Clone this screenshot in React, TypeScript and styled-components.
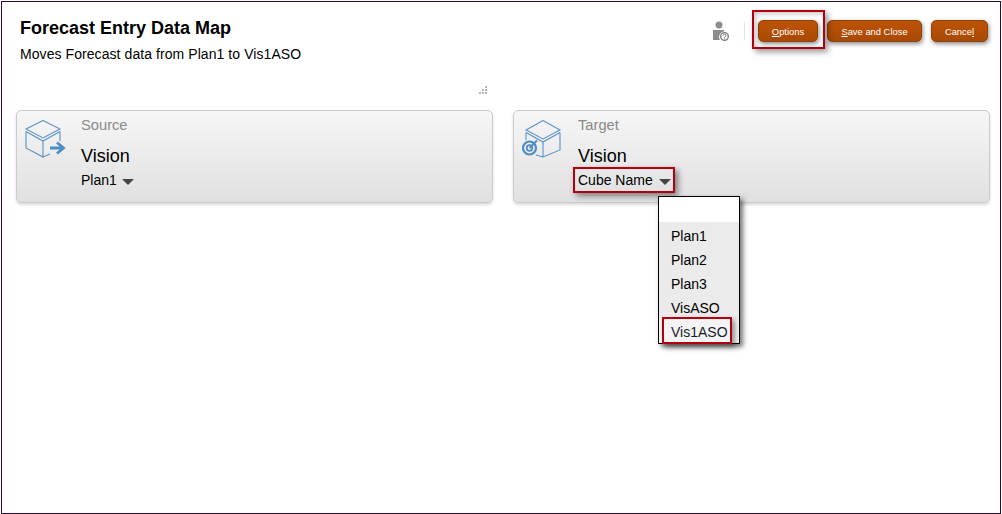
import styled, { createGlobalStyle } from 'styled-components'

const GlobalStyle = createGlobalStyle`
    html, body {
        margin: 0;
        padding: 0;
        background: #fff;
    }
    body {
        font-family: "Liberation Sans", Arial, sans-serif;
        color: #000;
    }
`

const options = ['Plan1', 'Plan2', 'Plan3', 'VisASO']

function SourceIcon() {
    return (
        <svg width="42" height="40" viewBox="0 0 42 40" fill="none" stroke="#5b92c8" strokeWidth="1.1">
            <path d="M1 9 L18 0.5 L35 9 L18 18 Z" />
            <path d="M1 11.5 L18 21 L35 11.5" />
            <path d="M1 11.5 V28 L18 37 V21" />
            <path d="M35 11.5 V21 M18 37 L25 34" />
            <path d="M25 28 H37 M32 22.5 L38.5 28 L32 33.5" stroke="#4f8bc4" strokeWidth="2.8" />
        </svg>
    )
}

function TargetIcon() {
    return (
        <svg width="42" height="40" viewBox="0 0 42 40" fill="none" stroke="#5b92c8" strokeWidth="1.1">
            <path d="M4 10 L21 0.5 L38 10 L21 19 Z" />
            <path d="M4 12.5 L21 22 L38 12.5" />
            <path d="M4 12.5 V20 M21 22 V37 L38 30 V12.5 M14 35 L21 37" />
            <circle cx="7.5" cy="28" r="6.5" strokeWidth="2.2" stroke="#4f8bc4" />
            <circle cx="7.5" cy="28" r="2.8" strokeWidth="1.7" stroke="#4f8bc4" />
            <path d="M7.5 28 L15 20.5" strokeWidth="1.8" stroke="#4f8bc4" />
        </svg>
    )
}

function HelpUserIcon() {
    return (
        <svg width="18" height="20" viewBox="0 0 18 20">
            <circle cx="7" cy="4" r="3.5" fill="#8c8c8c" />
            <path d="M1 9 H12 V10.5 A5.5 5.5 0 0 0 8 19 H1 Z" fill="#8c8c8c" />
            <circle cx="12.5" cy="15.5" r="3.8" fill="none" stroke="#777" strokeWidth="1.3" />
            <path d="M11.2 14.6 A1.4 1.4 0 1 1 12.9 15.9 L12.5 16.6" fill="none" stroke="#777" strokeWidth="1" />
            <circle cx="12.5" cy="17.8" r="0.6" fill="#777" />
        </svg>
    )
}

export default function App() {
    return (
        <>
            <GlobalStyle />
            <Frame>
                <Header>
                    <div>
                        <Title>Forecast Entry Data Map</Title>
                        <Subtitle>Moves Forecast data from Plan1 to Vis1ASO</Subtitle>
                    </div>
                    <Toolbar>
                        <HelpIcon>
                            <HelpUserIcon />
                        </HelpIcon>
                        <Divider />
                        <HighlightedButton>
                            <ActionButton $width={60}>
                                <u>O</u>ptions
                            </ActionButton>
                        </HighlightedButton>
                        <ActionButton $width={95} $gap>
                            <u>S</u>ave and Close
                        </ActionButton>
                        <ActionButton $width={57} $gap>
                            Cance<u>l</u>
                        </ActionButton>
                    </Toolbar>
                </Header>
                <Grip>
                    <svg width="9" height="8" viewBox="0 0 9 8" fill="#b5b5b5">
                        <rect x="6" y="0" width="2" height="2" />
                        <rect x="3" y="3" width="2" height="2" />
                        <rect x="6" y="3" width="2" height="2" />
                        <rect x="0" y="6" width="2" height="2" />
                        <rect x="3" y="6" width="2" height="2" />
                        <rect x="6" y="6" width="2" height="2" />
                    </svg>
                </Grip>
                <Cards>
                    <Card>
                        <CardIcon>
                            <SourceIcon />
                        </CardIcon>
                        <CardBody>
                            <CardLabel>Source</CardLabel>
                            <CardName>Vision</CardName>
                            <Selector>
                                Plan1 <Caret />
                            </Selector>
                        </CardBody>
                    </Card>
                    <Card>
                        <CardIcon>
                            <TargetIcon />
                        </CardIcon>
                        <CardBody>
                            <CardLabel>Target</CardLabel>
                            <CardName>Vision</CardName>
                            <Selector>
                                Cube Name <Caret $wide />
                                <SelectorHighlight />
                                <Menu>
                                    <MenuBlank />
                                    <MenuList>
                                        {options.map((o) => (
                                            <MenuItem key={o}>{o}</MenuItem>
                                        ))}
                                    </MenuList>
                                    <SelectedItem>Vis1ASO</SelectedItem>
                                </Menu>
                            </Selector>
                        </CardBody>
                    </Card>
                </Cards>
            </Frame>
        </>
    )
}

const Frame = styled.div`
    box-sizing: border-box;
    width: 1000px;
    height: 513px;
    margin: 1px 0 0 1px;
    border: 1px solid #2d0a36;
    padding: 16px 12px 0 14px;
`

const Header = styled.header`
    display: flex;
    justify-content: space-between;
    align-items: flex-start;
    padding-left: 4px;
`

const Title = styled.h1`
    margin: 0;
    font-size: 18px;
    line-height: 21px;
    font-weight: 700;
`

const Subtitle = styled.p`
    margin: 7px 0 0;
    font-size: 14px;
    line-height: 16px;
    letter-spacing: 0.07px;
`

const Toolbar = styled.div`
    display: flex;
    align-items: center;
    height: 24px;
    margin-top: 1px;
`

const HelpIcon = styled.div`
    display: flex;
    margin-right: 14px;
`

const Divider = styled.div`
    width: 1px;
    height: 18px;
    background: #e3e3e3;
    margin-right: 13px;
`

const ActionButton = styled.button<{ $gap?: boolean; $width: number }>`
    width: ${(p) => p.$width}px;
    height: 22px;
    padding: 0;
    margin-left: ${(p) => (p.$gap ? '9px' : '0')};
    border: 1px solid #8f4208;
    border-radius: 5px;
    background: linear-gradient(#bd5205, #a84a05);
    color: #fff;
    font-family: inherit;
    font-size: 9.4px;
    box-shadow: 1px 2px 4px rgba(0, 0, 0, 0.45);
`

const HighlightedButton = styled.div`
    position: relative;
    display: flex;
    &::after {
        content: '';
        position: absolute;
        left: -6px;
        top: -10px;
        width: 69px;
        height: 35px;
        border: 2px solid #b3000f;
        box-shadow: 3px 3px 6px rgba(0, 0, 0, 0.4), inset 2px 2px 5px rgba(0, 0, 0, 0.22);
        pointer-events: none;
    }
`

const Grip = styled.div`
    display: flex;
    justify-content: flex-end;
    width: 472px;
    height: 10px;
    margin-top: 24px;
`

const Cards = styled.div`
    display: grid;
    grid-template-columns: 477px 477px;
    column-gap: 20px;
    margin-top: 14px;
`

const Card = styled.section`
    box-sizing: border-box;
    display: flex;
    height: 93px;
    border: 1px solid #cbcbcb;
    border-radius: 5px;
    background: linear-gradient(#f6f6f6, #e0e0e0);
    box-shadow: 0 2px 3px rgba(0, 0, 0, 0.15);
`

const CardIcon = styled.div`
    width: 64px;
    padding: 9px 0 0 8px;
    box-sizing: border-box;
`

const CardBody = styled.div`
    display: flex;
    flex-direction: column;
    align-items: flex-start;
`

const CardLabel = styled.div`
    margin-top: 6px;
    font-size: 14.7px;
    line-height: 16px;
    color: #8a8a8a;
`

const CardName = styled.div`
    margin-top: 13px;
    font-size: 18px;
    line-height: 21px;
`

const Selector = styled.div`
    position: relative;
    display: flex;
    align-items: center;
    margin-top: 5px;
    font-size: 14px;
    line-height: 16px;
    white-space: pre;
`

const Caret = styled.span<{ $wide?: boolean }>`
    width: 0;
    height: 0;
    margin-left: ${(p) => (p.$wide ? '2px' : '1px')};
    margin-top: 3px;
    border-left: 6px solid transparent;
    border-right: 6px solid transparent;
    border-top: 6px solid #444;
`

const SelectorHighlight = styled.span`
    position: absolute;
    left: -5px;
    top: -5px;
    width: 98px;
    height: 22px;
    border: 2px solid #b3000f;
    box-shadow: 3px 3px 6px rgba(0, 0, 0, 0.45);
`

const Menu = styled.div`
    position: absolute;
    left: 80px;
    top: 24px;
    z-index: 2;
    box-sizing: border-box;
    width: 82px;
    height: 148px;
    border: 1px solid #000;
    background: #fff;
    box-shadow: 3px 3px 5px rgba(0, 0, 0, 0.55);
`

const MenuBlank = styled.div`
    height: 25px;
`

const MenuList = styled.div`
    padding-top: 2px;
    background: #ebebeb;
`

const MenuItem = styled.div`
    height: 24px;
    padding-left: 12px;
    font-size: 14px;
    line-height: 24px;
`

const SelectedItem = styled(MenuItem)`
    position: relative;
    height: 23px;
    background: #f4f4f4;
    color: #1a1a2a;
    &::after {
        content: '';
        position: absolute;
        left: 3px;
        top: -3px;
        width: 66px;
        height: 23px;
        border: 2px solid #b3000f;
        box-shadow: 3px 3px 5px rgba(0, 0, 0, 0.4);
    }
`
